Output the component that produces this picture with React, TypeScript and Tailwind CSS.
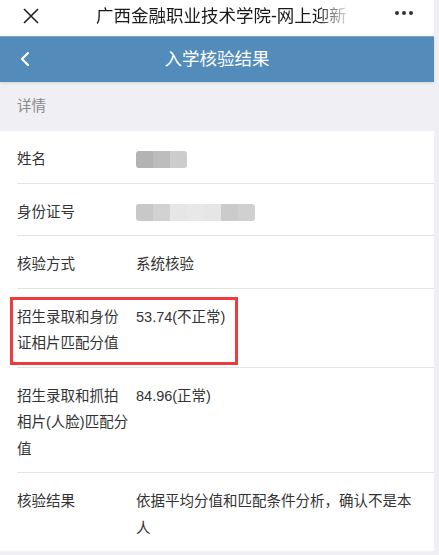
import React from "react";

const font = { fontFamily: '"Liberation Sans", "Noto Sans CJK SC", sans-serif' };

function Row({ label, children, last, box }: { label: string; children: React.ReactNode; last?: boolean; box?: boolean }) {
  return (
    <div className="relative pl-[17px]">
      <div className={`flex pt-[15px] pb-[10px] pr-[17px] leading-[26.5px] ${last ? "" : "border-b border-[#e3e3e3]"}`}>
        <div className="w-[114px] shrink-0 text-[#333]">{label}</div>
        <div className="ml-[5px] flex-1 text-[#333]">{children}</div>
      </div>
      {box && (
        <div className="absolute left-[10px] top-[8px] w-[228px] h-[68px] border-[3px] border-[#f03b3e]" />
      )}
    </div>
  );
}

function Blocks({ colors }: { colors: string[] }) {
  return (
    <div className="flex h-[17px] mt-[5px] rounded-[3px] overflow-hidden w-fit">
      {colors.map((c, i) => (
        <div key={i} className="w-[17px] h-full" style={{ backgroundColor: c }} />
      ))}
    </div>
  );
}

export default function App() {
  return (
    <div className="w-[439px] h-[555px] bg-[#efeff4] overflow-hidden" style={font}>
      <div className="w-[434px]">
        <div className="h-[36px] bg-white flex items-center relative">
          <svg className="absolute left-[23px] top-[8px]" width="16" height="16" viewBox="0 0 16 16">
            <path d="M1 1 L15 15 M15 1 L1 15" stroke="#222" strokeWidth="1.6" fill="none" />
          </svg>
          <div
            className="absolute left-[96px] top-[3px] whitespace-nowrap text-[17.5px] leading-[26px] text-[#1a1a1a]"
            style={{ WebkitMaskImage: "linear-gradient(to right, black 88%, rgba(0,0,0,0.15) 100%)", maskImage: "linear-gradient(to right, black 88%, rgba(0,0,0,0.15) 100%)" }}
          >
            广西金融职业技术学院-网上迎新
          </div>
          <div className="absolute left-[395px] top-[11px] flex gap-[3px]">
            <span className="w-[4px] h-[4px] rounded-full bg-[#333]" />
            <span className="w-[4px] h-[4px] rounded-full bg-[#333]" />
            <span className="w-[4px] h-[4px] rounded-full bg-[#333]" />
          </div>
        </div>
        <div className="h-[46px] bg-[#538bba] border-t border-[#7aa6cc] relative flex items-center justify-center shadow-[0_1px_3px_rgba(0,0,0,0.12)]">
          <svg className="absolute left-[19px] top-[14px]" width="12" height="16" viewBox="0 0 12 16">
            <path d="M9 2 L3 8 L9 14" stroke="white" strokeWidth="2.2" fill="none" strokeLinecap="round" strokeLinejoin="round" />
          </svg>
          <span className="text-white text-[17.5px]">入学核验结果</span>
        </div>
        <div className="h-[49px] flex items-center pl-[17px] text-[14.5px] text-[#8a8a8a]">详情</div>
        <div className="bg-white text-[14.5px]">
          <Row label="姓名">
            <Blocks colors={["#b3b3b3", "#bdbdbd", "#cccccc"]} />
          </Row>
          <Row label="身份证号">
            <Blocks colors={["#c8c8c8", "#d2d2d2", "#e6e6e6", "#e8e8e8", "#e6e6e6", "#cbcbcb", "#d0d0d0"]} />
          </Row>
          <Row label="核验方式">系统核验</Row>
          <Row label="招生录取和身份证相片匹配分值" box>53.74(不正常)</Row>
          <Row label="招生录取和抓拍相片(人脸)匹配分值">84.96(正常)</Row>
          <Row label="核验结果" last>依据平均分值和匹配条件分析，确认不是本人</Row>
        </div>
      </div>
    </div>
  );
}
